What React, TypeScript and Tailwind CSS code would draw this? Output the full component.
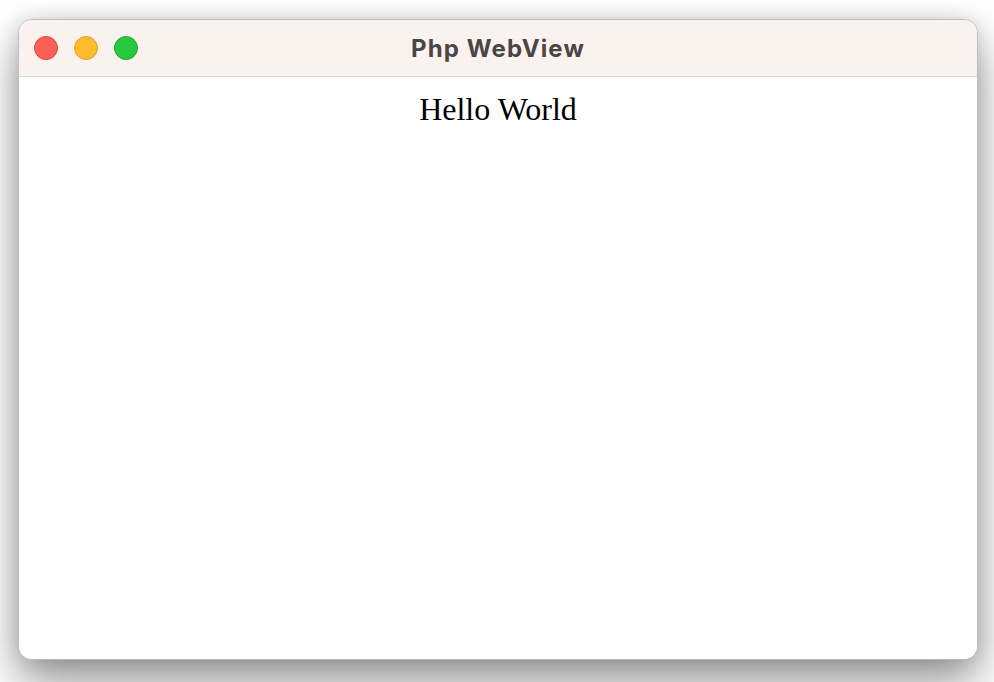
// Mac-style window hosting a tiny webview page

import React from 'react';

function TrafficLights() {
  return (
    <div className="flex items-center gap-4">
      <span className="block h-6 w-6 rounded-full border border-[#e0443e] bg-[#ff5f57]" />
      <span className="block h-6 w-6 rounded-full border border-[#dea123] bg-[#febc2e]" />
      <span className="block h-6 w-6 rounded-full border border-[#1aab29] bg-[#28c840]" />
    </div>
  );
}

export default function App() {
  return (
    <div className="h-[682px] w-[994px] overflow-hidden bg-white pl-[18px] pt-[19px]">
      <div className="flex h-[641px] w-[960px] flex-col overflow-hidden rounded-[14px] border border-[#bdbdbd] bg-white shadow-[0_22px_45px_rgba(0,0,0,0.42),0_0_18px_rgba(0,0,0,0.12)]">
        <div className="relative flex h-[57px] shrink-0 items-center border-b border-[#dcdad9] bg-[#faf2ef] pl-[15px]">
          <TrafficLights />
          <div
            className="absolute inset-0 flex items-center justify-center pt-[1px] text-[24px] font-bold tracking-[1.1px] text-[#4a4645]"
            style={{ fontFamily: 'Inter, "Liberation Sans", sans-serif' }}
          >
            Php WebView
          </div>
        </div>
        <div className="flex-1 bg-white pt-[14px]">
          <p
            className="text-center text-[32px] leading-[37px] text-black"
            style={{ fontFamily: '"Liberation Serif", serif' }}
          >
            Hello World
          </p>
        </div>
      </div>
    </div>
  );
}
